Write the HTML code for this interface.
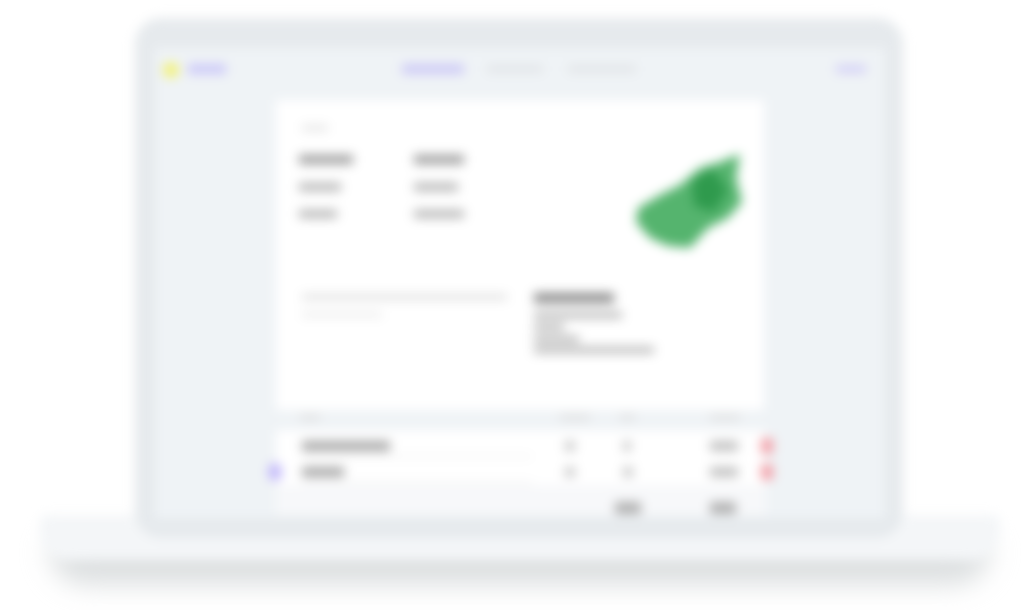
<!DOCTYPE html>
<html><head><meta charset="utf-8"><style>
body{margin:0;width:1036px;height:610px;background:#fff;overflow:hidden;font-family:"Liberation Sans",sans-serif;position:relative}
.a{position:absolute}
.blur{filter:blur(5.5px)}
</style></head><body>
<div class="a blur" style="left:0;top:0;width:1036px;height:610px">
 <div class="a" style="left:50px;top:540px;width:940px;height:45px;background:#dcdfe0;border-radius:10px 10px 40px 40px;filter:blur(12px)"></div>
 <div class="a" style="left:40px;top:515px;width:960px;height:45px;background:#f4f6f8;border-radius:6px 6px 30px 30px"></div>
 <div class="a" style="left:135px;top:18px;width:768px;height:520px;background:#e6eaed;border-radius:26px"></div>
 <div class="a" style="left:155px;top:48px;width:730px;height:470px;background:#eff3f6"></div>
 <div class="a" style="left:163px;top:62px;width:16px;height:16px;border-radius:50%;background:#f2f27a"></div>
 <div class="a" style="left:188px;top:64px;width:38px;height:10px;background:#cbc8f8"></div>
 <div class="a" style="left:402px;top:64px;width:62px;height:10px;background:#cdcaf6"></div>
 <div class="a" style="left:487px;top:65px;width:56px;height:8px;background:#e2e5e8"></div>
 <div class="a" style="left:568px;top:65px;width:68px;height:8px;background:#e2e5e8"></div>
 <div class="a" style="left:836px;top:65px;width:30px;height:8px;background:#d3d0f7"></div>
 <div class="a" style="left:276px;top:100px;width:488px;height:310px;background:#fff"></div>
 <div class="a" style="left:302px;top:125px;width:26px;height:6px;background:#e4e4e4"></div>
 <div class="a" style="left:299px;top:155px;width:54px;height:9px;background:#9c9c9c"></div>
 <div class="a" style="left:414px;top:155px;width:50px;height:9px;background:#9c9c9c"></div>
 <div class="a" style="left:299px;top:183px;width:42px;height:8px;background:#b4b4b4"></div>
 <div class="a" style="left:414px;top:183px;width:44px;height:8px;background:#b4b4b4"></div>
 <div class="a" style="left:299px;top:210px;width:38px;height:8px;background:#b4b4b4"></div>
 <div class="a" style="left:414px;top:210px;width:50px;height:8px;background:#b4b4b4"></div>
 <svg class="a" style="left:630px;top:150px" width="115" height="105"><path d="M8 58 L30 45 L50 35 L70 18 L90 12 L110 4 L106 28 L112 52 L98 68 L78 78 L60 98 L38 96 L20 88 L6 72 Z" fill="#55b46e"/><path d="M62 30 L82 18 L98 40 L84 62 L64 56Z" fill="#2f9a4d"/></svg>
 <div class="a" style="left:302px;top:294px;width:205px;height:6px;background:#e0e0e0"></div>
 <div class="a" style="left:302px;top:312px;width:80px;height:5px;background:#eaeaea"></div>
 <div class="a" style="left:534px;top:293px;width:80px;height:10px;background:#8a8a8a"></div>
 <div class="a" style="left:534px;top:312px;width:88px;height:6px;background:#b0b0b0"></div>
 <div class="a" style="left:534px;top:324px;width:30px;height:6px;background:#b0b0b0"></div>
 <div class="a" style="left:534px;top:336px;width:45px;height:6px;background:#b0b0b0"></div>
 <div class="a" style="left:534px;top:347px;width:120px;height:6px;background:#b0b0b0"></div>
 <div class="a" style="left:276px;top:430px;width:490px;height:55px;background:#fff"></div>
 <div class="a" style="left:276px;top:485px;width:490px;height:30px;background:#f7f8fa"></div>
 <div class="a" style="left:302px;top:441px;width:88px;height:10px;background:#a8a8a8"></div>
 <div class="a" style="left:302px;top:467px;width:42px;height:10px;background:#a8a8a8"></div>
 <div class="a" style="left:302px;top:456px;width:230px;height:1px;background:#ddd"></div>
 <div class="a" style="left:302px;top:482px;width:230px;height:1px;background:#ddd"></div>
 <div class="a" style="left:565px;top:441px;width:10px;height:10px;background:#c8c8c8"></div>
 <div class="a" style="left:565px;top:467px;width:10px;height:10px;background:#c8c8c8"></div>
 <div class="a" style="left:623px;top:441px;width:8px;height:10px;background:#c8c8c8"></div>
 <div class="a" style="left:623px;top:467px;width:10px;height:10px;background:#c8c8c8"></div>
 <div class="a" style="left:710px;top:441px;width:28px;height:10px;background:#c0c0c0"></div>
 <div class="a" style="left:710px;top:467px;width:28px;height:10px;background:#c0c0c0"></div>
 <div class="a" style="left:761px;top:438px;width:12px;height:16px;background:#f2a0a8;border-radius:3px"></div>
 <div class="a" style="left:761px;top:464px;width:12px;height:16px;background:#f2a0a8;border-radius:3px"></div>
 <div class="a" style="left:268px;top:463px;width:14px;height:18px;background:#c2b8fa;border-radius:50%"></div>
 <div class="a" style="left:615px;top:502px;width:26px;height:12px;background:#b0b0b0"></div>
 <div class="a" style="left:710px;top:502px;width:26px;height:12px;background:#b0b0b0"></div>
 <div class="a" style="left:300px;top:415px;width:20px;height:5px;background:#ddd"></div>
 <div class="a" style="left:560px;top:415px;width:30px;height:5px;background:#ddd"></div>
 <div class="a" style="left:620px;top:415px;width:15px;height:5px;background:#ddd"></div>
 <div class="a" style="left:710px;top:415px;width:30px;height:5px;background:#ddd"></div>
</div>
</body></html>
